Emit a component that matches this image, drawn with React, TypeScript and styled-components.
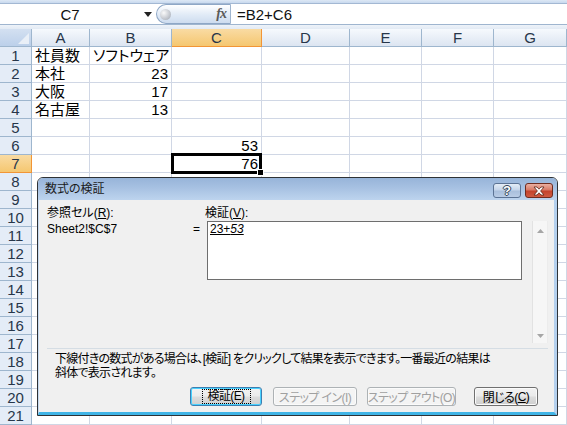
import React from "react";
import styled, { createGlobalStyle } from "styled-components";

const GlobalStyle = createGlobalStyle`
  html, body { margin: 0; padding: 0; }
  body {
    width: 567px;
    height: 425px;
    overflow: hidden;
    background: #fff;
    font-family: "Liberation Sans", "Noto Sans CJK JP", sans-serif;
  }
`;

const Page = styled.div`
  position: relative;
  width: 567px;
  height: 425px;
  overflow: hidden;
  background: #fff;
`;

const TopStrip = styled.div`
  height: 3px;
  background: linear-gradient(#dde8f5, #c8d9ee);
  border-bottom: 1px solid #a3b8d3;
`;

const FormulaBar = styled.div`
  display: flex;
  align-items: stretch;
  height: 20px;
  background: #fff;
  border-bottom: 1px solid #9fb5cf;
`;

const NameBox = styled.div`
  width: 140px;
  display: flex;
  align-items: center;
  justify-content: center;
  font: 15px "Liberation Sans", sans-serif;
  color: #111;
`;

const DropButton = styled.div`
  width: 16px;
  display: flex;
  align-items: center;
  justify-content: center;
`;

const FxPill = styled.div`
  width: 75px;
  box-sizing: border-box;
  display: flex;
  align-items: center;
  justify-content: space-between;
  padding: 0 4px 0 3px;
  border: 1px solid #8ea7c6;
  border-right-color: #9fb5cf;
  border-radius: 11px 0 0 11px;
  background: linear-gradient(#ffffff, #e3ecf7 50%, #cddcef);
`;

const Ball = styled.div`
  width: 11px;
  height: 11px;
  border-radius: 50%;
  background: radial-gradient(circle at 35% 35%, #fafafa, #b9bec6 70%, #9aa1ab);
`;

const Fx = styled.span`
  font: italic bold 14px "Liberation Serif", serif;
  color: #5a5a5a;
  letter-spacing: -1px;
`;

const FormulaText = styled.div`
  flex: 1;
  display: flex;
  align-items: center;
  padding-left: 6px;
  font: 15px "Liberation Sans", sans-serif;
  color: #111;
`;

const HeaderGap = styled.div`
  height: 4px;
  background: linear-gradient(#eef3f9, #e2eaf4);
`;

const Sheet = styled.div`
  display: grid;
  grid-template-columns: 32px 58px 82px 90px 88px 72px 72px 73px;
  grid-auto-rows: 18px;
`;

const Corner = styled.div`
  box-sizing: border-box;
  background: linear-gradient(#d3e0f1, #bcd0ea);
  border-right: 1px solid #9eb6ce;
  border-bottom: 1px solid #9eb6ce;
  display: flex;
  align-items: flex-end;
  justify-content: flex-end;
  padding: 0 2px 2px 0;
`;

const ColHeader = styled.div<{ $active?: boolean }>`
  box-sizing: border-box;
  display: flex;
  align-items: center;
  justify-content: center;
  border-right: 1px solid ${(p) => (p.$active ? "#f29536" : "#9eb6ce")};
  border-bottom: 1px solid ${(p) => (p.$active ? "#f29536" : "#9eb6ce")};
  background: ${(p) =>
    p.$active
      ? "linear-gradient(#f9dba3, #f5c770)"
      : "linear-gradient(#f6f9fd, #dce5f1)"};
  font: 15px "Liberation Sans", sans-serif;
  color: #27364a;
`;

const RowHeader = styled.div<{ $active?: boolean }>`
  box-sizing: border-box;
  display: flex;
  align-items: center;
  justify-content: center;
  border-right: 1px solid ${(p) => (p.$active ? "#f29536" : "#9eb6ce")};
  border-bottom: 1px solid ${(p) => (p.$active ? "#f29536" : "#9eb6ce")};
  background: ${(p) =>
    p.$active ? "linear-gradient(#f9dba3, #f5c770)" : "#e4ecf7"};
  font: 15px "Liberation Sans", sans-serif;
  color: #27364a;
`;

const Cell = styled.div<{ $num?: boolean; $selected?: boolean }>`
  position: relative;
  box-sizing: border-box;
  border-right: 1px solid #d0d7e5;
  border-bottom: 1px solid #d0d7e5;
  padding: 0 3px;
  line-height: 17px;
  white-space: nowrap;
  text-align: ${(p) => (p.$num ? "right" : "left")};
  font-size: 15px;
  font-family: "Liberation Sans", "Noto Sans CJK JP", sans-serif;
  font-feature-settings: "palt";
  color: #000;
  z-index: ${(p) => (p.$selected ? 2 : 0)};
  ${(p) =>
    p.$selected &&
    `
    &::before {
      content: "";
      position: absolute;
      top: -2px; left: -1px; right: -1px; bottom: -2px;
      border: 3px solid #000;
      box-sizing: border-box;
    }
    &::after {
      content: "";
      position: absolute;
      right: -3px; bottom: -4px;
      width: 5px; height: 5px;
      background: #000;
      border: 1px solid #fff;
    }
  `}
`;

/* dialog */

const Dialog = styled.div`
  position: absolute;
  left: 37px;
  top: 177px;
  width: 521px;
  height: 239px;
  box-sizing: border-box;
  border: 1px solid #2e3236;
  border-radius: 6px 6px 0 0;
  overflow: hidden;
  display: flex;
  flex-direction: column;
  font-family: "Liberation Sans", "Noto Sans CJK JP", sans-serif;
  font-feature-settings: "palt";
  font-size: 12px;
  color: #000;
`;

const TitleBar = styled.div`
  height: 22px;
  flex: none;
  display: flex;
  align-items: flex-start;
  padding: 5px 4px 0 7px;
  box-sizing: border-box;
  background: linear-gradient(#97b4d9 0%, #a7c1e2 45%, #bdd4ee 100%);
`;

const Title = styled.span`
  flex: 1;
  font-size: 12px;
  line-height: 13px;
  color: #1a1a1a;
`;

const CaptionButton = styled.div<{ $close?: boolean }>`
  width: 28px;
  height: 15px;
  box-sizing: border-box;
  margin-left: 4px;
  border: 1px solid ${(p) => (p.$close ? "#6e2b1f" : "#5c7394")};
  border-radius: 3px;
  display: flex;
  align-items: center;
  justify-content: center;
  background: ${(p) =>
    p.$close
      ? "linear-gradient(#eab0a2 0%, #d87a67 45%, #c4432c 55%, #cf5b42 100%)"
      : "linear-gradient(#e4edf7 0%, #c5d5ea 45%, #a9bfdc 55%, #b9cce5 100%)"};
  font: bold 13px "Liberation Sans", sans-serif;
  color: #fff;
  text-shadow: 0 0 1px #2a3a50, 1px 0 0 #3a4a60, -1px 0 0 #3a4a60, 0 1px 0 #3a4a60, 0 -1px 0 #3a4a60;
`;

const Body = styled.div`
  flex: 1;
  display: flex;
  flex-direction: column;
  background: #f0f0f0;
  border-left: 1px solid #c6daf0;
  border-right: 3px solid #b4d0ee;
  border-bottom: 3px solid #40b4e6;
  padding: 5px 5px 6px 8px;
`;

const Fields = styled.div`
  display: grid;
  grid-template-columns: 146px 14px 315px 10px 16px;
  grid-template-rows: 16px 122px;
`;

const Label = styled.div<{ $shift?: number }>`
  line-height: 16px;
  margin-left: ${(p) => p.$shift ?? 0}px;
  white-space: nowrap;
`;

const Mn = styled.span`
  text-decoration: underline;
`;

const Value = styled.div`
  line-height: 16px;
`;

const TextBox = styled.div`
  height: 59px;
  box-sizing: border-box;
  background: #fff;
  border: 1px solid #6e6e6e;
  padding: 0 2px;
  line-height: 15px;
`;

const Formula = styled.span`
  text-decoration: underline;
`;

const Result = styled.i`
  font-style: italic;
`;

const ScrollBar = styled.div`
  grid-column: 5;
  grid-row: 2;
  box-sizing: border-box;
  border-left: 1px solid #e2e2e2;
  border-right: 1px solid #ececec;
  background: #f6f6f6;
  display: flex;
  flex-direction: column;
  justify-content: space-between;
  align-items: center;
  padding: 8px 0 5px;
`;

const Separator = styled.div`
  margin-top: 5px;
  height: 1px;
  background: #d5dde4;
  width: 501px;
`;

const Note = styled.p`
  margin: 3px 0 0 8px;
  line-height: 14px;
  letter-spacing: -0.75px;
  color: #000;
`;

const Buttons = styled.div`
  margin-top: 7px;
  display: flex;
  padding-left: 143px;
`;

const Button = styled.div<{ $w: number; $gap: number; $focus?: boolean; $disabled?: boolean }>`
  width: ${(p) => p.$w}px;
  height: 19px;
  margin-right: ${(p) => p.$gap}px;
  box-sizing: border-box;
  border: 1px solid ${(p) => (p.$focus ? "#3c7fb1" : p.$disabled ? "#adb2b5" : "#707070")};
  border-radius: 3px;
  display: flex;
  align-items: center;
  justify-content: center;
  background: ${(p) =>
    p.$disabled
      ? "#f4f4f4"
      : "linear-gradient(#f2f2f2 0%, #ebebeb 48%, #dddddd 52%, #cfcfcf 100%)"};
  box-shadow: ${(p) => (p.$focus ? "inset 0 0 0 1px #48d1ff" : "inset 0 0 0 1px #fbfbfb")};
  color: ${(p) => (p.$disabled ? "#a0a0a0" : "#000")};
  font-size: 12px;
  letter-spacing: -0.6px;
  white-space: nowrap;
`;

const FocusRing = styled.span`
  padding: 0 5px;
  outline: 1px dotted #000;
  outline-offset: 0;
  line-height: 13px;
`;

const Arrow = ({ up }: { up?: boolean }) => (
  <svg width="7" height="4" viewBox="0 0 7 4">
    <polygon points={up ? "3.5,0 7,4 0,4" : "0,0 7,0 3.5,4"} fill="#a6a6a6" />
  </svg>
);

const columns = ["A", "B", "C", "D", "E", "F", "G"];

const data: Record<number, Record<string, string>> = {
  1: { A: "社員数", B: "ソフトウェア" },
  2: { A: "本社", B: "23" },
  3: { A: "大阪", B: "17" },
  4: { A: "名古屋", B: "13" },
  6: { C: "53" },
  7: { C: "76" },
};

const rows = Array.from({ length: 21 }, (_, i) => i + 1);

export default function App() {
  return (
    <Page>
      <GlobalStyle />
      <TopStrip />
      <FormulaBar>
        <NameBox>C7</NameBox>
        <DropButton>
          <svg width="8" height="5" viewBox="0 0 8 5">
            <polygon points="0,0 8,0 4,5" fill="#222" />
          </svg>
        </DropButton>
        <FxPill>
          <Ball />
          <Fx>fx</Fx>
        </FxPill>
        <FormulaText>=B2+C6</FormulaText>
      </FormulaBar>
      <HeaderGap />
      <Sheet>
        <Corner>
          <svg width="11" height="11" viewBox="0 0 11 11">
            <polygon points="11,0 11,11 0,11" fill="#e9eff7" />
          </svg>
        </Corner>
        {columns.map((c) => (
          <ColHeader key={c} $active={c === "C"}>
            {c}
          </ColHeader>
        ))}
        {rows.map((r) => (
          <React.Fragment key={r}>
            <RowHeader $active={r === 7}>{r}</RowHeader>
            {columns.map((c) => {
              const v = data[r]?.[c] ?? "";
              return (
                <Cell key={c} $num={/^\d+$/.test(v)} $selected={r === 7 && c === "C"}>
                  {v}
                </Cell>
              );
            })}
          </React.Fragment>
        ))}
      </Sheet>

      <Dialog>
        <TitleBar>
          <Title>数式の検証</Title>
          <CaptionButton>?</CaptionButton>
          <CaptionButton $close>
            <svg width="14" height="10" viewBox="0 0 14 10">
              <path
                d="M2 1 L5 1 L7 3.2 L9 1 L12 1 L8.6 5 L12 9 L9 9 L7 6.8 L5 9 L2 9 L5.4 5 Z"
                fill="#fff"
                stroke="#5a2418"
                strokeWidth="0.8"
                strokeLinejoin="round"
              />
            </svg>
          </CaptionButton>
        </TitleBar>
        <Body>
          <Fields>
            <Label>
              参照セル(<Mn>R</Mn>):
            </Label>
            <div />
            <Label $shift={-2}>
              検証(<Mn>V</Mn>):
            </Label>
            <div />
            <div />
            <Value>Sheet2!$C$7</Value>
            <Value>=</Value>
            <div>
              <TextBox>
                <Formula>
                  23+<Result>53</Result>
                </Formula>
              </TextBox>
            </div>
            <div />
            <ScrollBar>
              <Arrow up />
              <Arrow />
            </ScrollBar>
          </Fields>
          <Separator />
          <Note>
            下線付きの数式がある場合は、[検証] をクリックして結果を表示できます。一番最近の結果は
            <br />
            斜体で表示されます。
          </Note>
          <Buttons>
            <Button $w={72} $gap={11} $focus>
              <FocusRing>検証(E)</FocusRing>
            </Button>
            <Button $w={84} $gap={10} $disabled>
              ステップ イン(I)
            </Button>
            <Button $w={89} $gap={18} $disabled>
              ステップ アウト(O)
            </Button>
            <Button $w={64} $gap={0}>
              閉じる(<Mn>C</Mn>)
            </Button>
          </Buttons>
        </Body>
      </Dialog>
    </Page>
  );
}
